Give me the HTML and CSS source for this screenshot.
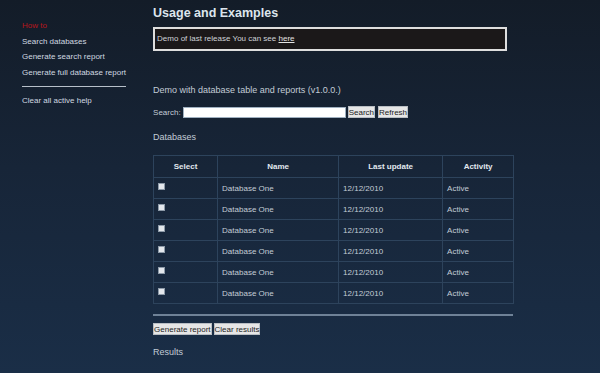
FILE: index.html
```html
<!DOCTYPE html>
<html lang="en">
<head>
    <meta charset="UTF-8">
    <title>Usage and Examples</title>
    <link rel="stylesheet" href="styles.css">
</head>
<body>
    <div class="page">
        <div class="sidebar">
            <ul class="help-menu">
                <li class="active">How to</li>
                <li>Search databases</li>
                <li>Generate search report</li>
                <li>Generate full database report</li>
            </ul>
            <hr class="menu-sep">
            <ul class="help-menu">
                <li>Clear all active help</li>
            </ul>
        </div>

        <div class="content">
            <h1 class="title">Usage and Examples</h1>
            <div class="notice">Demo of last release You can see <a href="#">here</a></div>

            <p class="section-text demo-text">Demo with database table and reports (v1.0.0.)</p>

            <div class="search-row">
                <label for="searchInput">Search:</label>
                <input type="text" id="searchInput" class="search-input">
                <button class="small-btn">Search</button>
                <button class="small-btn">Refresh</button>
            </div>

            <p class="section-text databases-label">Databases</p>

            <table class="db-table">
                <colgroup>
                    <col class="col-select">
                    <col class="col-name">
                    <col class="col-date">
                    <col class="col-activity">
                </colgroup>
                <thead>
                    <tr>
                        <th>Select</th>
                        <th>Name</th>
                        <th>Last update</th>
                        <th>Activity</th>
                    </tr>
                </thead>
                <tbody id="dbRows">
                    <tr><td><span class="check"></span></td><td>Database One</td><td>12/12/2010</td><td>Active</td></tr>
                    <tr><td><span class="check"></span></td><td>Database One</td><td>12/12/2010</td><td>Active</td></tr>
                    <tr><td><span class="check"></span></td><td>Database One</td><td>12/12/2010</td><td>Active</td></tr>
                    <tr><td><span class="check"></span></td><td>Database One</td><td>12/12/2010</td><td>Active</td></tr>
                    <tr><td><span class="check"></span></td><td>Database One</td><td>12/12/2010</td><td>Active</td></tr>
                    <tr><td><span class="check"></span></td><td>Database One</td><td>12/12/2010</td><td>Active</td></tr>
                </tbody>
            </table>

            <hr class="table-sep">

            <div class="report-row">
                <button class="small-btn">Generate report</button>
                <button class="small-btn">Clear results</button>
            </div>

            <p class="section-text results-label">Results</p>
        </div>
    </div>
</body>
</html>
```

FILE: styles.css
```css
html, body {
    height: 100%;
}
body {
    margin: 0;
    background: linear-gradient(180deg, #131c28 0%, #172538 45%, #1a2e47 100%);
    color: #c3ccd6;
    font-family: "Liberation Sans", Arial, sans-serif;
    font-size: 8px;
    overflow: hidden;
}
.page {
    display: flex;
}
.sidebar {
    flex: 0 0 152px;
    box-sizing: border-box;
    padding: 18px 27px 0 22px;
}
.help-menu {
    list-style: none;
    margin: 0;
    padding: 0;
}
.help-menu li {
    line-height: 15.5px;
    color: #d0d8e0;
    white-space: nowrap;
}
.help-menu li.active {
    color: #b8161c;
}
.menu-sep {
    border: none;
    border-top: 1px solid #b7c0ca;
    margin: 6px 0 5.5px 0;
}
.content {
    width: 361px;
    padding-top: 5px;
}
.title {
    margin: 0;
    font-size: 12.5px;
    line-height: 16px;
    font-weight: bold;
    color: #dde5ed;
}
.notice {
    margin-top: 6px;
    width: 354px;
    box-sizing: border-box;
    height: 24px;
    line-height: 20px;
    padding: 0 2px;
    background: #1b1819;
    border: 2px solid #dedede;
    color: #cfd3d8;
    white-space: nowrap;
}
.notice a {
    color: #e4e4e4;
}
.section-text {
    margin: 0;
    font-size: 9px;
    line-height: 12px;
}
.demo-text {
    margin-top: 33px;
}
.search-row {
    display: flex;
    align-items: center;
    gap: 2px;
    margin-top: 10px;
    height: 12px;
}
.search-input {
    width: 163px;
    height: 11px;
    box-sizing: border-box;
    padding: 0;
    border: 1px solid #9fb0c0;
    background: #fff;
}
.small-btn {
    height: 12px;
    box-sizing: border-box;
    padding: 0;
    border: 1px solid #b9bec4;
    background: #e6e6e6;
    color: #1c1c1c;
    font-family: inherit;
    font-size: 8px;
    line-height: 9px;
    cursor: pointer;
}
.search-row .small-btn + .small-btn {
    margin-left: 1px;
}
.databases-label {
    margin-top: 13px;
}
.db-table {
    margin-top: 12px;
    width: 360px;
    border-collapse: collapse;
    table-layout: fixed;
}
.col-select { width: 64px; }
.col-name { width: 121px; }
.col-date { width: 104px; }
.col-activity { width: 71px; }
.db-table th,
.db-table td {
    border: 1px solid #2d435c;
    padding: 0 4px;
    text-align: left;
    white-space: nowrap;
}
.db-table th {
    height: 21px;
    text-align: center;
    font-weight: bold;
    color: #e1e8ef;
}
.db-table td {
    height: 20px;
}
.check {
    display: inline-block;
    width: 5px;
    height: 5px;
    border: 1px solid #8d9aa8;
    background: #e3e7ec;
    vertical-align: 1px;
}
.table-sep {
    border: none;
    border-top: 2px solid #6f8297;
    margin: 10px 0 0 0;
    width: 360px;
}
.report-row {
    display: flex;
    gap: 2px;
    margin-top: 7px;
}
.results-label {
    margin-top: 11px;
}
```
